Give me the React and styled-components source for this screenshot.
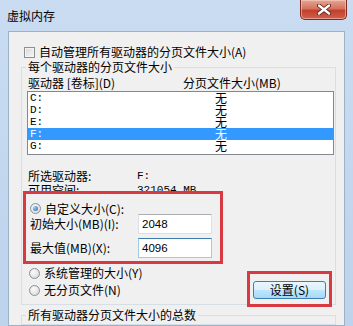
import React from "react";
import styled, { createGlobalStyle } from "styled-components";

const GlobalStyle = createGlobalStyle`
    body {
        margin: 0;
        overflow: hidden;
        font-family: "Noto Sans CJK SC", "Liberation Sans", sans-serif;
        font-size: 12px;
        color: #000;
    }
`;

const Window = styled.div`
    width: 353px;
    height: 326px;
    overflow: hidden;
    display: flex;
    flex-direction: column;
    background: linear-gradient(to bottom, #c9dcf1, #bdd3ec);
`;

const TitleBar = styled.div`
    height: 31px;
    flex-shrink: 0;
    display: flex;
    justify-content: space-between;
    padding-left: 7px;
    box-sizing: border-box;
`;

const Title = styled.span`
    margin-top: 9px;
    line-height: 14px;
`;

const CloseButton = styled.div`
    width: 47px;
    height: 20px;
    margin-right: 6px;
    box-sizing: border-box;
    border: 1px solid #7d2b22;
    border-top: none;
    border-radius: 0 0 5px 5px;
    background: linear-gradient(to bottom, #e4a593 0%, #d7735d 45%, #c2402c 55%, #d0604a 100%);
    box-shadow: inset 0 0 0 1px rgba(255, 220, 210, 0.5);
    display: flex;
    align-items: center;
    justify-content: center;
`;

const Panel = styled.div`
    flex: 1;
    margin: 0 8px;
    background: #f0f0f0;
    border: 1px solid #9fb1c6;
    display: flex;
    flex-direction: column;
`;

const CheckRow = styled.div`
    display: flex;
    align-items: center;
    gap: 4px;
    margin: 14px 0 0 15px;
    height: 12px;
    line-height: 12px;
`;

const CheckBox = styled.span`
    width: 11px;
    height: 11px;
    box-sizing: border-box;
    border: 1px solid #8e8f8f;
    background: linear-gradient(135deg, #d8d8d8, #f7f7f7);
    box-shadow: inset 0 0 0 1px #f4f4f4;
`;

const Group = styled.fieldset`
    margin: ${(p) => p.$top}px 0 0 12px;
    width: 315px;
    box-sizing: border-box;
    padding: 0;
    border: 1px solid #d5dfe5;
    min-inline-size: 0;
    ${(p) => (p.$open ? "flex: 1;" : "")}
`;

const Legend = styled.legend`
    margin-left: 4px;
    padding: 0 2px;
    line-height: 12px;
`;

const HeaderRow = styled.div`
    display: flex;
    margin: 4px 0 0 6px;
    height: 12px;
    line-height: 12px;
`;

const HeaderCell = styled.span`
    width: ${(p) => p.$w}px;
`;

const List = styled.div`
    margin: 2px 0 0 5px;
    width: 307px;
    height: 64px;
    box-sizing: border-box;
    border: 1px solid #828790;
    background: #fff;
`;

const ListRow = styled.div`
    display: grid;
    grid-template-columns: 182px 1fr;
    height: 12px;
    line-height: 12px;
    padding-left: 2px;
    background: ${(p) => (p.$selected ? "#3399ff" : "transparent")};
    color: ${(p) => (p.$selected ? "#fff" : "#000")};
`;

const Drive = styled.span`
    font-family: "Liberation Mono", monospace;
    font-size: 11px;
`;

const Size = styled.span`
    padding-left: 3px;
`;

const InfoRow = styled.div`
    display: flex;
    margin: ${(p) => p.$top || 0}px 0 0 6px;
    height: 14px;
    line-height: 14px;
`;

const InfoLabel = styled.span`
    width: 109px;
`;

const InfoValue = styled.span`
    font-family: "Liberation Mono", monospace;
    font-size: 11px;
`;

const Highlight = styled.div`
    position: relative;
    z-index: 1;
    background: #f0f0f0;
    border: 3px solid #d93a41;
    box-sizing: border-box;
`;

const CustomBox = styled(Highlight)`
    margin: -6px 0 0 1px;
    width: 200px;
    height: 73px;
    padding: 9px 0 0 4px;
`;

const RadioRow = styled.div`
    display: flex;
    align-items: center;
    gap: 4px;
    height: ${(p) => p.$h || 12}px;
    line-height: 12px;
`;

const Radio = styled.span`
    width: 11px;
    height: 11px;
    box-sizing: border-box;
    border-radius: 50%;
    border: 1px solid #8e8f8f;
    background: radial-gradient(circle at 40% 35%, #fbfbfb, #d4d4d4);
    display: flex;
    align-items: center;
    justify-content: center;
    &::after {
        content: "";
        width: 5px;
        height: 5px;
        border-radius: 50%;
        background: ${(p) => (p.$checked ? "radial-gradient(circle at 35% 35%, #9fd3ff, #1d5ea8)" : "transparent")};
    }
`;

const FieldRow = styled.div`
    display: flex;
    align-items: center;
    height: 20px;
    margin-bottom: 4px;
`;

const FieldLabel = styled.span`
    width: 108px;
    line-height: 12px;
`;

const Input = styled.div`
    width: 74px;
    height: 20px;
    box-sizing: border-box;
    background: #fff;
    border: 1px solid ${(p) => (p.$focused ? "#a4c9e3" : "#dbdfe6")};
    border-top-color: ${(p) => (p.$focused ? "#3d7bad" : "#abadb3")};
    padding-left: 3px;
    font-family: "Liberation Sans", sans-serif;
    font-size: 11.5px;
    line-height: 18px;
`;

const BottomRow = styled.div`
    display: flex;
    height: 40px;
`;

const RadioColumn = styled.div`
    display: flex;
    flex-direction: column;
    gap: 5px;
    margin: 3px 0 0 7px;
`;

const ButtonBox = styled(Highlight)`
    margin: 7px 3px 0 auto;
    width: 85px;
    height: 36px;
    padding: 7px 0 0 3px;
`;

const Button = styled.div`
    width: 73px;
    height: 18px;
    box-sizing: border-box;
    border: 1px solid #3c7fb1;
    border-radius: 3px;
    background: linear-gradient(to bottom, #eaf6fd 0%, #d9f0fc 50%, #bee6fd 51%, #a7d9f5 100%);
    display: flex;
    align-items: center;
    justify-content: center;
    line-height: 12px;
`;

const drives = ["C:", "D:", "E:", "F:", "G:"];

const App = () => {
    return (
        <Window>
            <GlobalStyle />
            <TitleBar>
                <Title>虚拟内存</Title>
                <CloseButton>
                    <svg width="14" height="11" viewBox="0 0 14 11">
                        <path d="M2 1.5 L12 9.5 M12 1.5 L2 9.5" stroke="#5a1a12" strokeWidth="4" strokeLinecap="round" />
                        <path d="M2 1.5 L12 9.5 M12 1.5 L2 9.5" stroke="#fff" strokeWidth="2.4" strokeLinecap="round" />
                    </svg>
                </CloseButton>
            </TitleBar>
            <Panel>
                <CheckRow>
                    <CheckBox />
                    <span>自动管理所有驱动器的分页文件大小(A)</span>
                </CheckRow>
                <Group $top={3}>
                    <Legend>每个驱动器的分页文件大小</Legend>
                    <HeaderRow>
                        <HeaderCell $w={155}>驱动器 [卷标](D)</HeaderCell>
                        <HeaderCell>分页文件大小(MB)</HeaderCell>
                    </HeaderRow>
                    <List>
                        {drives.map((d) => (
                            <ListRow key={d} $selected={d === "F:"}>
                                <Drive>{d}</Drive>
                                <Size>无</Size>
                            </ListRow>
                        ))}
                    </List>
                    <InfoRow $top={14}>
                        <InfoLabel>所选驱动器:</InfoLabel>
                        <InfoValue>F:</InfoValue>
                    </InfoRow>
                    <InfoRow>
                        <InfoLabel>可用空间:</InfoLabel>
                        <InfoValue>321054 MB</InfoValue>
                    </InfoRow>
                    <CustomBox>
                        <RadioRow $h={11}>
                            <Radio $checked />
                            <span>自定义大小(C):</span>
                        </RadioRow>
                        <FieldRow>
                            <FieldLabel>初始大小(MB)(I):</FieldLabel>
                            <Input>2048</Input>
                        </FieldRow>
                        <FieldRow>
                            <FieldLabel>最大值(MB)(X):</FieldLabel>
                            <Input $focused>4096</Input>
                        </FieldRow>
                    </CustomBox>
                    <BottomRow>
                        <RadioColumn>
                            <RadioRow>
                                <Radio />
                                <span>系统管理的大小(Y)</span>
                            </RadioRow>
                            <RadioRow>
                                <Radio />
                                <span>无分页文件(N)</span>
                            </RadioRow>
                        </RadioColumn>
                        <ButtonBox>
                            <Button>设置(S)</Button>
                        </ButtonBox>
                    </BottomRow>
                </Group>
                <Group $top={4} $open>
                    <Legend>所有驱动器分页文件大小的总数</Legend>
                </Group>
            </Panel>
        </Window>
    );
};

export default App;
